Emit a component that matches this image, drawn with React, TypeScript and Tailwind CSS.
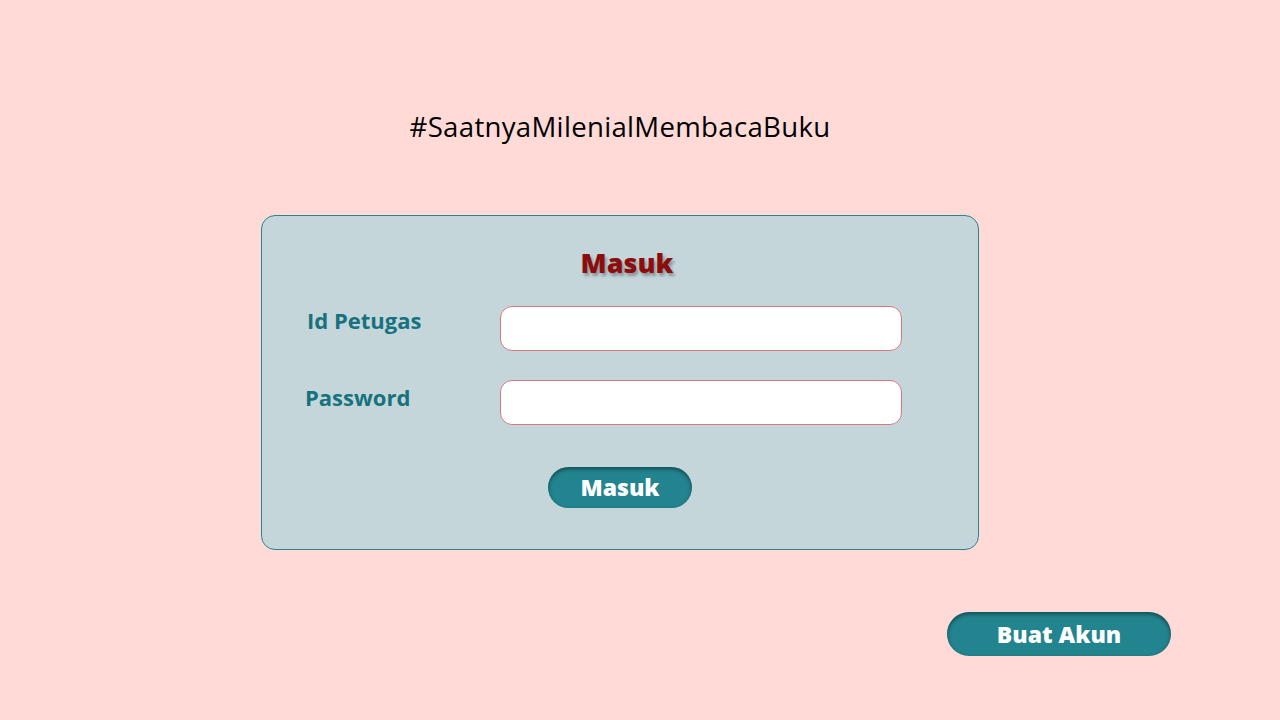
import React from "react";

const font = { fontFamily: '"Open Sans", "Noto Sans", sans-serif' };

const App: React.FC = () => {
  return (
    <div className="min-h-screen w-full bg-[#ffdad7] flex flex-col" style={font}>
      {/* Hashtag heading */}
      <div className="w-[1240px] pt-[108px] flex justify-center">
        <h1 className="text-[27.6px] leading-[36px] text-black tracking-[0.3px]">
          #SaatnyaMilenialMembacaBuku
        </h1>
      </div>

      {/* Login card */}
      <div className="w-[1240px] mt-[71px] flex justify-center">
        <div className="w-[718px] h-[335px] rounded-[14px] border border-[#2a8590] bg-[#c4d6da] flex flex-col pt-[27px]">
          <h2 className="text-center pl-[14px] text-[27px] leading-[40px] font-extrabold text-[#8b0d0d] [text-shadow:2px_3px_3px_rgba(0,0,0,0.3)]">
            Masuk
          </h2>

          <div className="flex items-start mt-[23px]">
            <label className="w-[238px] pl-[45px] mt-[0px] text-[22px] leading-[28px] font-bold text-[#17727e]">
              Id Petugas
            </label>
            <input
              type="text"
              className="w-[402px] h-[45px] rounded-[12px] border border-[#d9787c] bg-white outline-none px-3"
            />
          </div>

          <div className="flex items-start mt-[29px]">
            <label className="w-[238px] pl-[43px] mt-[3px] text-[22px] leading-[28px] font-bold text-[#17727e]">
              Password
            </label>
            <input
              type="password"
              className="w-[402px] h-[45px] rounded-[12px] border border-[#d9787c] bg-white outline-none px-3"
            />
          </div>

          <div className="flex justify-center mt-[42px]">
            <button className="w-[144px] h-[41px] rounded-full bg-[#22848f] text-white text-[23px] leading-none font-extrabold shadow-[inset_0_2px_4px_rgba(0,0,0,0.45)]">
              Masuk
            </button>
          </div>
        </div>
      </div>

      {/* Create account */}
      <div className="flex justify-end pr-[109px] mt-[62px]">
        <button className="w-[224px] h-[44px] rounded-full bg-[#22848f] text-white text-[23px] leading-none font-extrabold shadow-[inset_0_2px_4px_rgba(0,0,0,0.45)]">
          Buat Akun
        </button>
      </div>
    </div>
  );
};

export default App;
